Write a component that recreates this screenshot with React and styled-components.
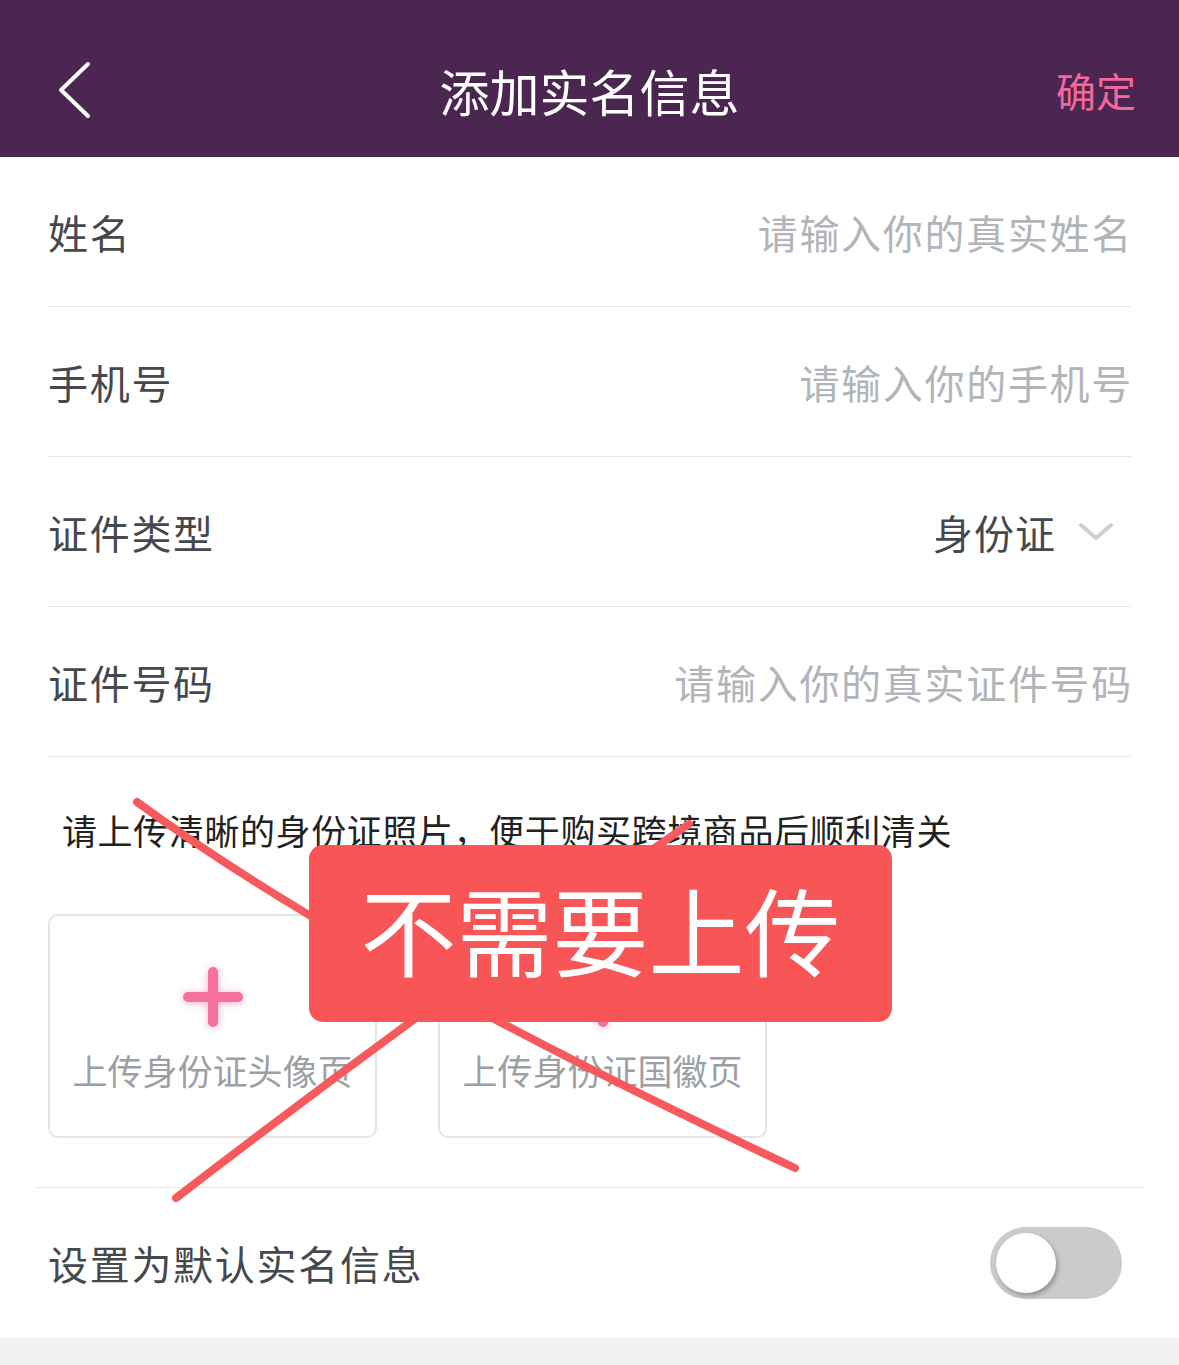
import React from "react";
import styled, { createGlobalStyle } from "styled-components";

const Global = createGlobalStyle`
  html, body { margin: 0; padding: 0; }
  body {
    background: #f0f1f3;
    font-family: "Noto Sans CJK SC", "Noto Sans", sans-serif;
  }
  * { box-sizing: border-box; }
`;

const Page = styled.div`
  position: relative;
  width: 1179px;
  height: 1365px;
  overflow: hidden;
  background: #f0f1f3;
`;

const Header = styled.header`
  height: 157px;
  padding: 22px 43px 0 43px;
  background: #4a2650;
  display: grid;
  grid-template-columns: 1fr auto 1fr;
  align-items: center;
`;

const BackBtn = styled.button`
  justify-self: start;
  border: 0;
  background: none;
  padding: 0 0 0 13px;
  display: flex;
  cursor: pointer;
`;

const Title = styled.h1`
  margin: 0;
  font-size: 50px;
  font-weight: 400;
  color: #ffffff;
  letter-spacing: 0;
  line-height: 1;
`;

const Confirm = styled.span`
  justify-self: end;
  font-size: 40px;
  color: #f2679c;
  line-height: 1;
`;

const Card = styled.main`
  background: #ffffff;
`;

const Form = styled.section`
  padding: 0 48px;
`;

const Row = styled.div`
  height: 150px;
  display: flex;
  align-items: center;
  justify-content: space-between;
  border-bottom: 1px solid #e6e6e6;
`;

const Label = styled.span`
  font-size: 40px;
  color: #45484d;
  letter-spacing: 1.7px;
`;

const Field = styled.input`
  border: 0;
  outline: none;
  background: transparent;
  text-align: right;
  font-family: "Noto Sans CJK SC", sans-serif;
  font-size: 40px;
  letter-spacing: 1.7px;
  color: #45484d;
  width: 700px;
  padding: 0;
  margin-right: -2px;
  &::placeholder { color: #b1b4b9; }
`;

const Select = styled.div`
  display: flex;
  align-items: center;
  gap: 22px;
  padding-right: 17px;
  font-size: 40px;
  color: #45484d;
  letter-spacing: 1px;
`;

const UploadSection = styled.section`
  margin: 0 36px;
  padding: 48px 0 49px 26px;
  border-bottom: 1px solid #e6e6e6;
`;

const Tip = styled.p`
  margin: 0 0 59px;
  font-size: 35px;
  line-height: 50px;
  color: #222222;
  letter-spacing: 0.6px;
`;

const Boxes = styled.div`
  display: flex;
  gap: 61px;
  margin-left: -14px;
`;

const UploadBox = styled.div`
  width: 329px;
  height: 224px;
  border: 2px solid #e5e5e6;
  border-radius: 10px;
  display: flex;
  flex-direction: column;
  align-items: center;
  padding-top: 46px;
  gap: 14px;
`;

const UploadText = styled.span`
  font-size: 35px;
  line-height: 48px;
  color: #9c9fa4;
`;

const ToggleRow = styled.div`
  height: 150px;
  display: flex;
  align-items: center;
  justify-content: space-between;
  padding: 0 57px 0 48px;
`;

const Switch = styled.div`
  width: 132px;
  height: 72px;
  border-radius: 36px;
  background: #cbcbcb;
  padding: 6px;
  display: flex;
  align-items: center;
`;

const Knob = styled.div`
  width: 60px;
  height: 60px;
  border-radius: 50%;
  background: #ffffff;
  box-shadow: 2px 3px 5px rgba(0, 0, 0, 0.28);
`;

const Footer = styled.div`
  height: 27px;
  background: #f0f1f3;
`;

const Scribble = styled.svg`
  position: absolute;
  left: 0;
  top: 0;
  width: 1179px;
  height: 1365px;
  pointer-events: none;
  z-index: 1;
`;

const Stamp = styled.div`
  position: absolute;
  left: 309px;
  top: 845px;
  width: 583px;
  height: 177px;
  border-radius: 14px;
  background: #f85656;
  z-index: 2;
  display: flex;
  align-items: center;
  justify-content: center;
  font-size: 96px;
  color: #ffffff;
  line-height: 1;
  padding-bottom: 12px;
`;

const Plus = () => (
  <svg width="70" height="70" viewBox="0 0 70 70" style={{ filter: "drop-shadow(0 1px 4px rgba(246,112,155,0.55))" }}>
    <path d="M35 10 V60 M10 35 H60" stroke="#f5709b" strokeWidth="10" strokeLinecap="round" fill="none" />
  </svg>
);

export default function App() {
  return (
    <Page>
      <Global />
      <Header>
        <BackBtn aria-label="返回">
          <svg width="36" height="58" viewBox="0 0 36 58">
            <polyline points="32,3 5,29 32,55" fill="none" stroke="#fff" strokeWidth="4" strokeLinecap="round" strokeLinejoin="round" />
          </svg>
        </BackBtn>
        <Title>添加实名信息</Title>
        <Confirm>确定</Confirm>
      </Header>
      <Card>
        <Form>
          <Row>
            <Label>姓名</Label>
            <Field placeholder="请输入你的真实姓名" />
          </Row>
          <Row>
            <Label>手机号</Label>
            <Field placeholder="请输入你的手机号" />
          </Row>
          <Row>
            <Label>证件类型</Label>
            <Select>
              身份证
              <svg width="36" height="20" viewBox="0 0 36 20">
                <polyline points="3,3 18,16 33,3" fill="none" stroke="#cfcfcf" strokeWidth="4" strokeLinecap="round" strokeLinejoin="round" />
              </svg>
            </Select>
          </Row>
          <Row>
            <Label>证件号码</Label>
            <Field placeholder="请输入你的真实证件号码" />
          </Row>
        </Form>
        <UploadSection>
          <Tip>请上传清晰的身份证照片，便于购买跨境商品后顺利清关</Tip>
          <Boxes>
            <UploadBox>
              <Plus />
              <UploadText>上传身份证头像页</UploadText>
            </UploadBox>
            <UploadBox>
              <Plus />
              <UploadText>上传身份证国徽页</UploadText>
            </UploadBox>
          </Boxes>
        </UploadSection>
        <ToggleRow>
          <Label>设置为默认实名信息</Label>
          <Switch>
            <Knob />
          </Switch>
        </ToggleRow>
      </Card>
      <Footer />
      <Scribble viewBox="0 0 1179 1365">
        <path d="M137 802 Q 360 965 795 1168" fill="none" stroke="#f65a5c" strokeWidth="8" strokeLinecap="round" />
        <path d="M176 1198 Q 420 1010 689 824" fill="none" stroke="#f65a5c" strokeWidth="8" strokeLinecap="round" />
      </Scribble>
      <Stamp>不需要上传</Stamp>
    </Page>
  );
}
